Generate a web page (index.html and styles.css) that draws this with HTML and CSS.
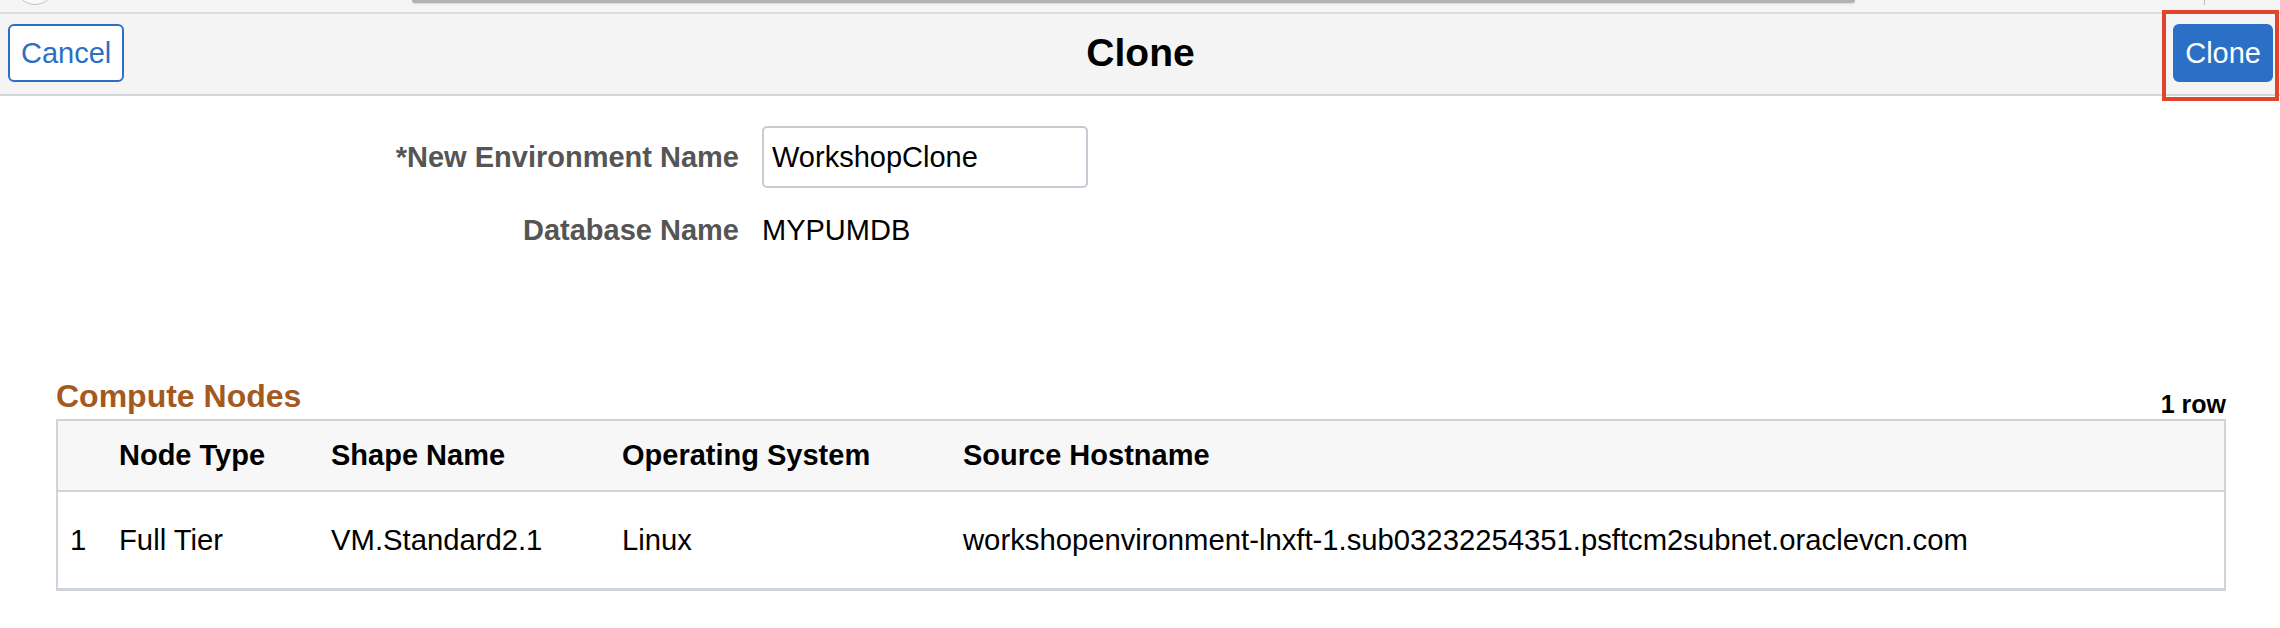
FILE: index.html
```html
<!DOCTYPE html>
<html lang="en">
<head>
<meta charset="utf-8">
<title>Clone</title>
<link rel="stylesheet" href="styles.css">
</head>
<body>
<div class="chrome">
  <span class="chrome-circle"></span>
  <span class="chrome-bar"></span>
  <span class="chrome-line"></span>
</div>
<header class="header">
  <div class="header-left"><button class="btn btn-secondary" type="button">Cancel</button></div>
  <h1 class="title">Clone</h1>
  <div class="header-right"><span class="highlight"><button class="btn btn-primary" type="button">Clone</button></span></div>
</header>
<main>
  <form class="form">
    <label class="form-label" for="envname">*New Environment Name</label>
    <input class="form-input" id="envname" type="text" value="WorkshopClone">
    <span class="form-label">Database Name</span>
    <span class="form-value">MYPUMDB</span>
  </form>
  <section class="grid-section">
    <div class="grid-head">
      <h2 class="grid-title">Compute Nodes</h2>
      <span class="grid-count">1 row</span>
    </div>
    <table class="grid">
      <colgroup>
        <col class="c-num"><col class="c-type"><col class="c-shape"><col class="c-os"><col>
      </colgroup>
      <thead>
        <tr><th></th><th>Node Type</th><th>Shape Name</th><th>Operating System</th><th>Source Hostname</th></tr>
      </thead>
      <tbody>
        <tr><td>1</td><td>Full Tier</td><td>VM.Standard2.1</td><td>Linux</td><td>workshopenvironment-lnxft-1.sub03232254351.psftcm2subnet.oraclevcn.com</td></tr>
      </tbody>
    </table>
  </section>
</main>
</body>
</html>
```
FILE: styles.css
```css
* { box-sizing: border-box; }
html, body {
  margin: 0;
  padding: 0;
  background: #ffffff;
  font-family: "Liberation Sans", Arial, Helvetica, sans-serif;
  color: #000;
  width: 2280px;
  overflow: hidden;
}

/* browser chrome remnant */
.chrome {
  height: 12px;
  background: #f5f5f5;
  display: flex;
  align-items: flex-start;
  overflow: hidden;
}
.chrome-circle {
  flex: none;
  width: 40px;
  height: 40px;
  margin-top: -35px;
  margin-left: 15px;
  border-radius: 50%;
  border: 1px solid #c4c4c4;
  background: #fafafa;
}
.chrome-bar {
  flex: none;
  width: 1443px;
  height: 3px;
  margin-left: 357px;
  background: #b2b2b2;
  border-radius: 0 0 3px 3px;
  box-shadow: 0 1px 2px rgba(0,0,0,0.12);
}
.chrome-line {
  flex: none;
  width: 1px;
  height: 5px;
  margin-left: 349px;
  background: #bdbdbd;
}

/* header */
.header {
  height: 84px;
  border-top: 2px solid #dcdcdc;
  border-bottom: 2px solid #d3d7db;
  background: #f4f4f4;
  display: grid;
  grid-template-columns: 1fr auto 1fr;
  align-items: start;
  padding: 10px 7px 0 8px;
}
.header-right { justify-self: end; }
.title {
  margin: 0;
  font-size: 39px;
  font-weight: bold;
  line-height: 58px;
  color: #000;
}
.btn {
  font-family: "Liberation Sans", Arial, Helvetica, sans-serif;
  font-size: 29px;
  height: 58px;
  line-height: 54px;
  border-radius: 6px;
  border: 2px solid #2b6fc7;
  cursor: pointer;
  display: block;
}
.btn-secondary {
  background: #ffffff;
  color: #2b6fc7;
  padding: 0 11px;
}
.btn-primary {
  background: #2b6fc7;
  color: #ffffff;
  padding: 0 10px;
}
.highlight {
  position: relative;
  display: block;
}
.highlight::after {
  content: "";
  position: absolute;
  top: -14px;
  left: -11px;
  right: -6px;
  bottom: -19px;
  border: 4px solid #e1432c;
  pointer-events: none;
}

/* form */
.form {
  display: grid;
  grid-template-columns: 739px 326px;
  column-gap: 23px;
  row-gap: 25px;
  align-items: center;
  padding-top: 30px;
  margin: 0;
}
.form-label {
  text-align: right;
  font-size: 29px;
  font-weight: bold;
  color: #555555;
  line-height: 34px;
}
.form-input {
  height: 62px;
  width: 326px;
  border: 2px solid #c5ccd4;
  border-radius: 5px;
  padding: 0 8px;
  font-family: "Liberation Sans", Arial, Helvetica, sans-serif;
  font-size: 29px;
  color: #000;
  background: #fff;
}
.form-value {
  font-size: 29px;
  line-height: 34px;
  color: #000;
}

/* grid */
.grid-section {
  padding: 131px 54px 0 56px;
}
.grid-head {
  display: flex;
  justify-content: space-between;
  align-items: flex-end;
}
.grid-title {
  margin: 0;
  font-size: 32px;
  font-weight: bold;
  line-height: 36px;
  color: #a4591f;
}
.grid-count {
  font-size: 25px;
  font-weight: bold;
  line-height: 20px;
  color: #000;
}
.grid {
  margin-top: 5px;
  width: 100%;
  table-layout: fixed;
  border-collapse: separate;
  border-spacing: 0;
  border: 2px solid #cfd4da;
  border-bottom-width: 3px;
}
.c-num { width: 49px; }
.c-type { width: 212px; }
.c-shape { width: 291px; }
.c-os { width: 341px; }
.grid th {
  background: #f7f7f7;
  text-align: left;
  font-size: 29px;
  font-weight: bold;
  line-height: 33px;
  padding: 18px 12px;
  border-bottom: 2px solid #cfd4da;
  white-space: nowrap;
}
.grid td {
  font-size: 29.25px;
  line-height: 33px;
  padding: 32px 12px 31px;
  white-space: nowrap;
  background: #fff;
}
```
